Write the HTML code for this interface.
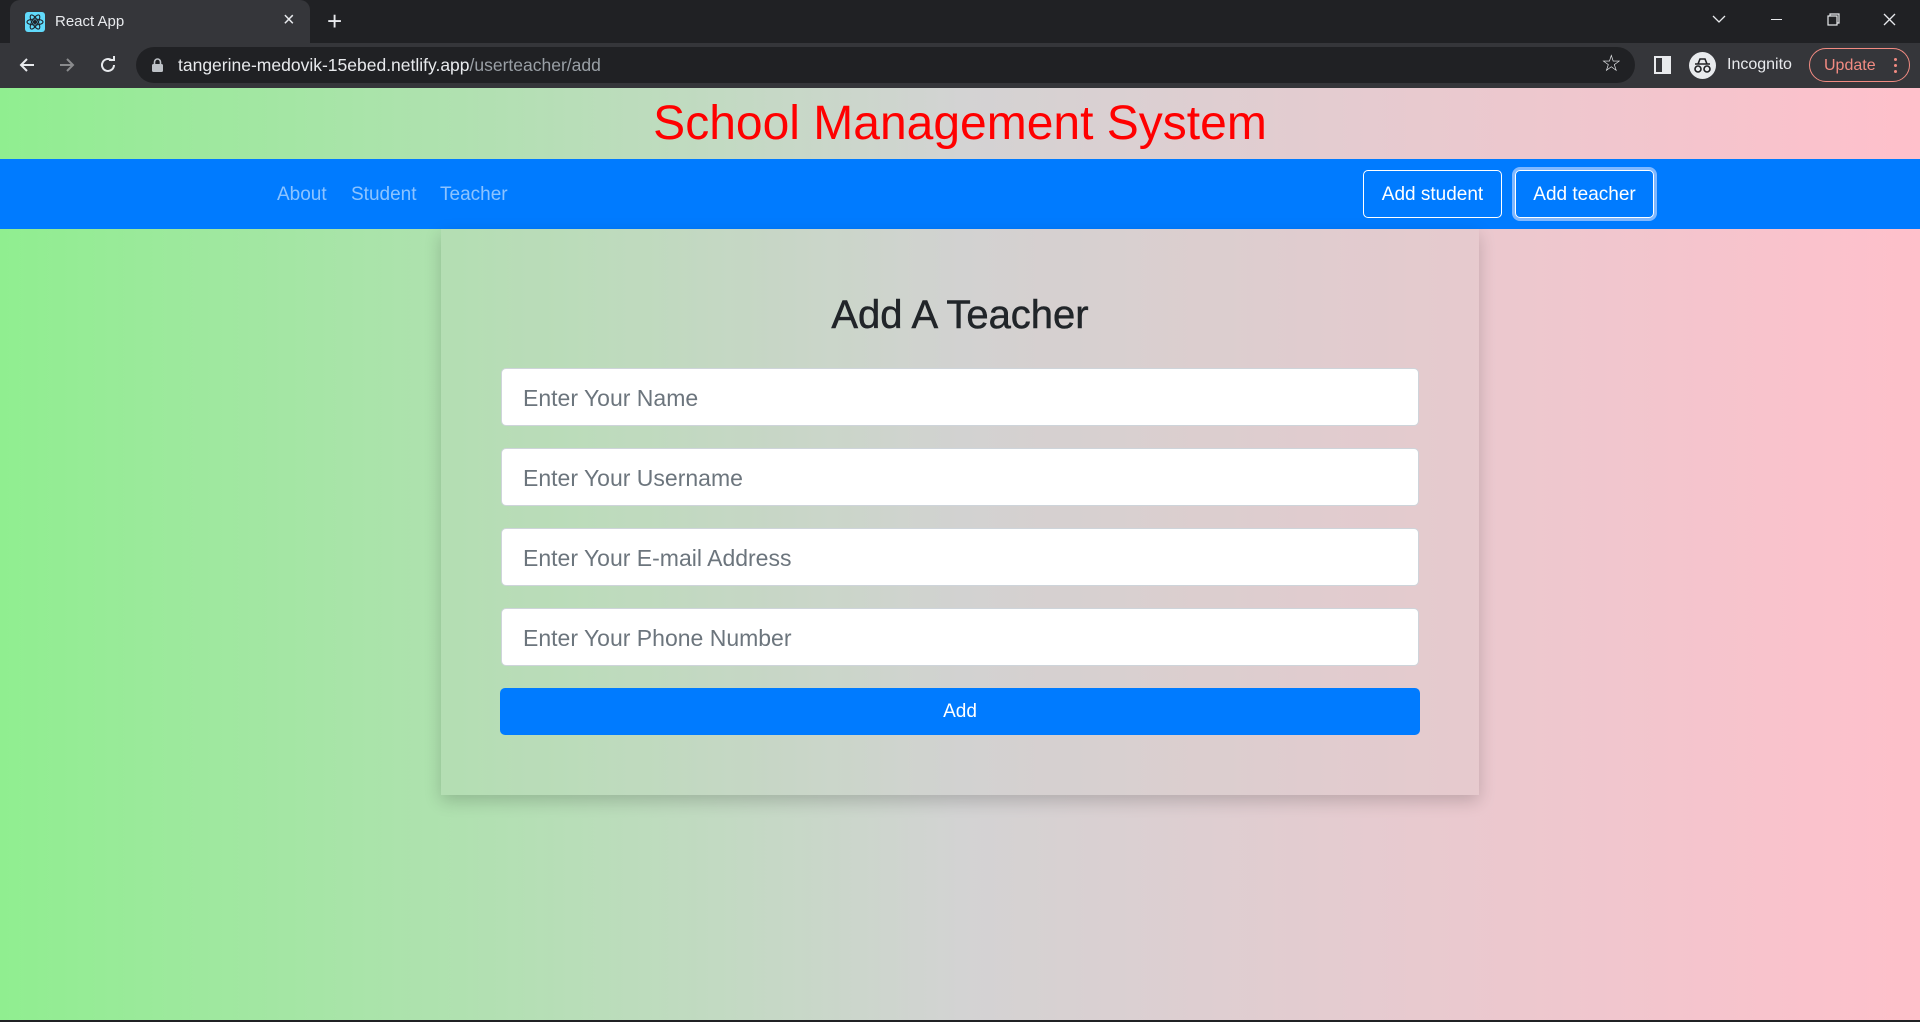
<!DOCTYPE html>
<html><head><meta charset="utf-8">
<style>
*{box-sizing:border-box;margin:0;padding:0}
html,body{width:1920px;height:1022px;overflow:hidden;font-family:"Liberation Sans",sans-serif}
.tabbar{position:absolute;left:0;top:0;width:1920px;height:43px;background:#202124}
.tab{position:absolute;left:10px;top:0;width:300px;height:43px;background:#35363a;border-radius:10px 10px 0 0}
.addr{position:absolute;left:0;top:43px;width:1920px;height:45px;background:#35363a}
.omni{position:absolute;left:136px;top:4px;width:1499px;height:36px;background:#202124;border-radius:18px}
.w{color:#e8eaed;position:absolute}
.page{position:absolute;left:0;top:88px;width:1920px;height:932px;background:linear-gradient(to right,#90ee90,#d3d3d3 50%,#ffc0cb)}
.bottom{position:absolute;left:0;top:1020px;width:1920px;height:2px;background:#202124}
h1{position:absolute;left:0;width:1920px;top:0;height:71px;line-height:71px;text-align:center;color:#ff0000;font-weight:400;font-size:48px}
nav{position:absolute;left:0;top:71px;width:1920px;height:70px;background:#007bff}
nav a{position:absolute;top:0;line-height:72px;font-size:19px;color:rgba(255,255,255,.55);text-decoration:none}
.nb{position:absolute;top:11px;height:48px;width:139px;border:1px solid #fff;border-radius:5px;color:#fff;font-size:19px;text-align:center;line-height:48px}
.card{position:absolute;left:441px;top:141px;width:1038px;height:566px;background:rgba(210,210,200,.15);box-shadow:0 6px 16px rgba(0,0,0,.18)}
h2{position:absolute;left:0;width:1038px;top:64px;text-align:center;font-size:40px;font-weight:400;color:#212529;-webkit-text-stroke:0.5px #212529}
.in{position:absolute;left:60px;width:918px;height:58px;background:#fff;border:1px solid #ced4da;border-radius:5px;font-size:23px;color:#6c757d;padding-left:21px;line-height:58px}
.btn{position:absolute;left:59px;top:459px;width:920px;height:47px;background:#007bff;border-radius:5px;color:#fff;font-size:19px;text-align:center;line-height:48px}
</style></head><body>
<div class="tabbar">
  <div class="tab">
    <div style="position:absolute;left:15px;top:12px;width:20px;height:20px;background:#61dafb;border-radius:3px"></div>
    <svg style="position:absolute;left:15px;top:12px" width="20" height="20" viewBox="0 0 20 20" fill="none" stroke="#20232a" stroke-width="1.1"><ellipse cx="10" cy="10" rx="8" ry="3"/><ellipse cx="10" cy="10" rx="8" ry="3" transform="rotate(60 10 10)"/><ellipse cx="10" cy="10" rx="8" ry="3" transform="rotate(120 10 10)"/><circle cx="10" cy="10" r="1.5" fill="#20232a"/></svg>
    <div class="w" style="left:45px;top:13px;font-size:15px">React App</div>
    <div class="w" style="left:273px;top:9px;font-size:20px">×</div>
  </div>
  <div class="w" style="left:327px;top:6px;font-size:26px;font-weight:300">+</div>
  <svg style="position:absolute;left:1712px;top:14px" width="14" height="10"><path d="M1 2 L7 8 L13 2" stroke="#e8eaed" stroke-width="1.3" fill="none"/></svg>
  <div style="position:absolute;left:1771px;top:19px;width:11px;height:1px;background:#e8eaed"></div>
  <svg style="position:absolute;left:1827px;top:13px" width="13" height="13" fill="none" stroke="#e8eaed" stroke-width="1.2"><rect x="1" y="3" width="9" height="9"/><path d="M3 3 V1 H12 V10 H10"/></svg>
  <svg style="position:absolute;left:1883px;top:13px" width="13" height="13" stroke="#e8eaed" stroke-width="1.3"><path d="M1 1 L12 12 M12 1 L1 12"/></svg>
</div>
<div class="addr">
  <svg style="position:absolute;left:18px;top:13px" width="18" height="18" fill="none" stroke="#e8eaed" stroke-width="2"><path d="M16 9 H3 M9 3 L3 9 L9 15"/></svg>
  <svg style="position:absolute;left:58px;top:13px" width="18" height="18" fill="none" stroke="#8a8b8d" stroke-width="2"><path d="M2 9 H15 M9 3 L15 9 L9 15"/></svg>
  <svg style="position:absolute;left:99px;top:13px" width="18" height="18" fill="none" stroke="#e8eaed" stroke-width="2"><path d="M15 9 A6 6 0 1 1 13 4.5"/><path d="M10 4 L15 4 L15 0" fill="none"/></svg>
  <div class="omni">
    <svg style="position:absolute;left:16px;top:11px" width="11" height="14"><rect x="0" y="6" width="11" height="8" rx="1.5" fill="#bdc1c6"/><path d="M2.5 6 V4 A3 3 0 0 1 8.5 4 V6" stroke="#bdc1c6" stroke-width="1.6" fill="none"/></svg>
    <div style="position:absolute;left:42px;top:8px;font-size:17.5px;color:#e8eaed">tangerine-medovik-15ebed.netlify.app<span style="color:#9aa0a6">/userteacher/add</span></div>
    <div style="position:absolute;left:1465px;top:3px;font-size:23px;color:#e8eaed">☆</div>
  </div>
  <svg style="position:absolute;left:1654px;top:13px" width="17" height="18" fill="none" stroke="#e8eaed" stroke-width="2"><rect x="1" y="1" width="15" height="16"/><rect x="9" y="1" width="7" height="16" fill="#e8eaed"/></svg>
  <div style="position:absolute;left:1689px;top:9px;width:27px;height:27px;border-radius:50%;background:#e8eaed"></div>
  <svg style="position:absolute;left:1692px;top:14px" width="21" height="18" fill="none" stroke="#202124" stroke-width="1.6"><path d="M3 7 H18 M6 7 L8 2 H13 L15 7"/><circle cx="6" cy="12" r="3"/><circle cx="15" cy="12" r="3"/></svg>
  <div class="w" style="left:1727px;top:13px;font-size:16px">Incognito</div>
  <div style="position:absolute;left:1809px;top:5px;width:101px;height:34px;border:1px solid #f28b82;border-radius:17px">
    <div style="position:absolute;left:14px;top:8px;font-size:16px;color:#f28b82">Update</div>
    <div style="position:absolute;left:84px;top:9px;width:3px;height:3px;border-radius:50%;background:#f28b82;box-shadow:0 6px 0 #f28b82,0 12px 0 #f28b82"></div>
  </div>
</div>
<div class="page">
  <h1>School Management System</h1>
  <nav>
    <a style="left:277px">About</a><a style="left:351px">Student</a><a style="left:440px">Teacher</a>
    <div class="nb" style="left:1363px">Add student</div>
    <div class="nb" style="left:1515px;box-shadow:0 0 0 3px rgba(160,200,255,.8)">Add teacher</div>
  </nav>
  <div class="card">
    <h2>Add A Teacher</h2>
    <div class="in" style="top:139px">Enter Your Name</div>
    <div class="in" style="top:219px">Enter Your Username</div>
    <div class="in" style="top:299px">Enter Your E-mail Address</div>
    <div class="in" style="top:379px">Enter Your Phone Number</div>
    <div class="btn">Add</div>
  </div>
</div>
<div class="bottom"></div>
</body></html>
